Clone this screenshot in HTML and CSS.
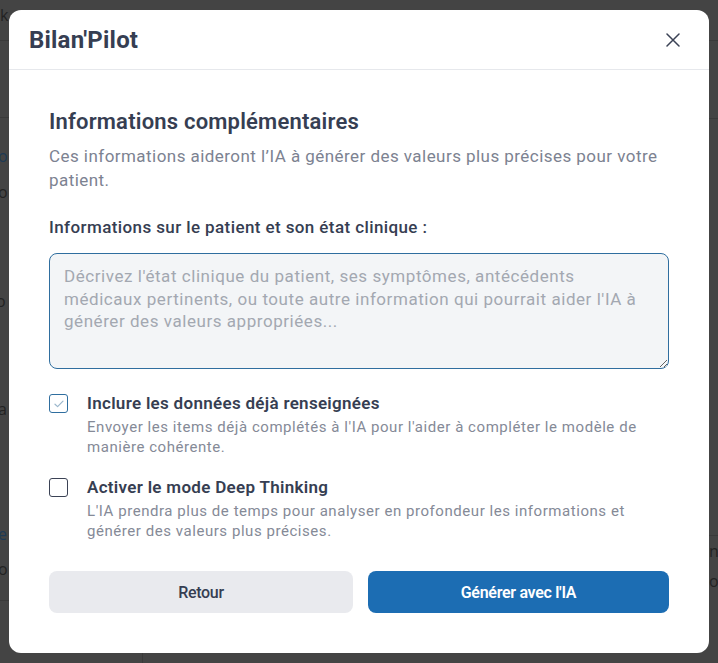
FILE: index.html
```html
<!DOCTYPE html>
<html lang="fr">
<head>
<meta charset="utf-8">
<title>Bilan'Pilot</title>
<link rel="stylesheet" href="styles.css">
</head>
<body>
<div class="backdrop">
  <div class="bg-frag f1">k</div>
  <div class="bg-frag f2 blue">or</div>
  <div class="bg-frag f3">o</div>
  <div class="bg-frag f4">o</div>
  <div class="bg-frag f5">a</div>
  <div class="bg-frag f6 blue">e</div>
  <div class="bg-frag f7">o</div>
  <div class="bg-frag f8">n</div>
  <div class="bg-frag f9">o</div>
  <div class="bg-line l1"></div>
  <div class="bg-line l2"></div>
  <div class="bg-line l3"></div>
  <div class="bg-line l4"></div>
  <div class="bg-line r1"></div>
  <div class="bg-line r2"></div>
  <div class="bg-line r3"></div>
</div>
<div class="modal">
  <div class="modal-header">
    <h1 class="brand">Bilan'Pilot</h1>
    <button class="close" aria-label="Fermer">
      <svg width="14" height="14" viewBox="0 0 14 14"><path d="M1 1 L13 13 M13 1 L1 13" stroke="#3b4255" stroke-width="1.5" stroke-linecap="round" fill="none"/></svg>
    </button>
  </div>
  <div class="modal-body">
    <h2 class="title">Informations complémentaires</h2>
    <p class="subtitle">Ces informations aideront l’IA à générer des valeurs plus précises pour votre patient.</p>
    <label class="field-label">Informations sur le patient et son état clinique :</label>
    <textarea class="field" placeholder="Décrivez l'état clinique du patient, ses symptômes, antécédents médicaux pertinents, ou toute autre information qui pourrait aider l'IA à générer des valeurs appropriées..."></textarea>

    <div class="option option-first">
      <span class="check checked">
        <svg width="12" height="10" viewBox="0 0 12 10"><path d="M2 5.2 L4.6 7.6 L10 2.2" stroke="#9bb7cc" stroke-width="1.2" fill="none" stroke-linecap="round" stroke-linejoin="round"/></svg>
      </span>
      <div class="option-text">
        <div class="option-title">Inclure les données déjà renseignées</div>
        <div class="option-desc">Envoyer les items déjà complétés à l'IA pour l'aider à compléter le modèle de manière cohérente.</div>
      </div>
    </div>

    <div class="option">
      <span class="check"></span>
      <div class="option-text">
        <div class="option-title">Activer le mode Deep Thinking</div>
        <div class="option-desc">L'IA prendra plus de temps pour analyser en profondeur les informations et générer des valeurs plus précises.</div>
      </div>
    </div>

    <div class="actions">
      <button class="btn btn-secondary">Retour</button>
      <button class="btn btn-primary">Générer avec l'IA</button>
    </div>
  </div>
</div>
</body>
</html>
```

FILE: styles.css
```css
* { box-sizing: border-box; }
html, body { margin: 0; padding: 0; }
body {
  width: 718px;
  height: 663px;
  overflow: hidden;
  background: #444444;
  font-family: Roboto, "Liberation Sans", Arial, sans-serif;
  position: relative;
  padding: 10px 0 0 9px;
}
.backdrop { position: absolute; inset: 0; z-index: 0; }
.bg-frag { position: absolute; color: #222; font-size: 16px; font-family: "Open Sans", sans-serif; }
.bg-frag.blue { color: #1d3a55; }
.f1 { left: 0; top: 4px; }
.f2 { left: -2px; top: 145px; }
.f3 { left: -2px; top: 181px; }
.f4 { left: -4px; top: 290px; }
.f5 { left: -2px; top: 398px; }
.f6 { left: -2px; top: 523px; }
.f7 { left: -2px; top: 558px; }
.f8 { left: 709px; top: 540px; }
.f9 { left: 709px; top: 570px; }
.bg-line { position: absolute; height: 1px; background: #3a3a3a; }
.l1 { left: 0; width: 9px; top: 40px; }
.l2 { left: 0; width: 9px; top: 117px; }
.l3 { left: 0; width: 9px; top: 600px; }
.l4 { left: 142px; width: 1px; height: 10px; top: 653px; background: #3a3a3a; }
.r1 { left: 709px; width: 9px; top: 40px; }
.r2 { left: 709px; width: 9px; top: 118px; }
.r3 { left: 709px; width: 9px; top: 535px; }

.modal {
  position: relative;
  z-index: 1;
  width: 700px;
  height: 643px;
  background: #ffffff;
  border-radius: 12px;
  display: flex;
  flex-direction: column;
}
.modal-header {
  height: 60px;
  border-bottom: 1px solid #e6e8ec;
  display: flex;
  align-items: center;
  justify-content: space-between;
  padding: 0 29px 0 20px;
}
.brand {
  margin: 0;
  font-size: 24px;
  font-weight: 700;
  color: #363e52;
  letter-spacing: 0.2px;
  line-height: 30px;
}
.close {
  border: 0;
  background: transparent;
  padding: 0;
  width: 14px;
  height: 14px;
  display: flex;
}
.modal-body {
  padding: 38px 40px 0 40px;
  display: flex;
  flex-direction: column;
}
.title {
  margin: 0;
  font-size: 22px;
  font-weight: 600;
  color: #363e52;
  line-height: 28px;
  letter-spacing: 0.2px;
}
.subtitle {
  margin: 8px 0 0;
  font-size: 17px;
  line-height: 24px;
  color: #7c8291;
  letter-spacing: 0.45px;
}
.field-label {
  margin-top: 23px;
  font-size: 17px;
  font-weight: 500;
  color: #363e52;
  line-height: 24px;
  letter-spacing: 0.4px;
}
.field {
  margin-top: 14px;
  width: 620px;
  height: 116px;
  border: 1px solid #2f6e9f;
  border-radius: 8px;
  background: #f3f5f7;
  padding: 11px 14px;
  font-family: Roboto, "Liberation Sans", Arial, sans-serif;
  font-size: 17px;
  line-height: 22.5px;
  letter-spacing: 0.55px;
  color: #363e52;
  resize: vertical;
  outline: none;
}
.field::placeholder { color: #a3a8b1; }
.option {
  display: flex;
  align-items: flex-start;
  gap: 19px;
  margin-top: 19px;
}
.option-first { margin-top: 23px; }
.check {
  flex: none;
  width: 19px;
  height: 19px;
  border: 1px solid #3b4255;
  border-radius: 3px;
  margin-top: 2px;
  display: flex;
  align-items: center;
  justify-content: center;
  background: #fff;
}
.check.checked { border-color: #2f6e9f; }
.option-title {
  font-size: 17px;
  font-weight: 600;
  color: #363e52;
  line-height: 22px;
  letter-spacing: 0.3px;
}
.option-desc {
  margin-top: 3px;
  font-size: 15px;
  line-height: 20px;
  color: #858a97;
  letter-spacing: 0.55px;
}
.actions {
  margin-top: 30px;
  display: flex;
  gap: 15px;
}
.btn {
  height: 42px;
  border: 0;
  border-radius: 8px;
  font-family: Roboto, "Liberation Sans", Arial, sans-serif;
  font-size: 16px;
  font-weight: 500;
  letter-spacing: -0.3px;
}
.btn-secondary {
  width: 304px;
  background: #e9eaee;
  color: #363e52;
}
.btn-primary {
  width: 301px;
  background: #1c6db3;
  color: #ffffff;
  font-weight: 600;
}
```
